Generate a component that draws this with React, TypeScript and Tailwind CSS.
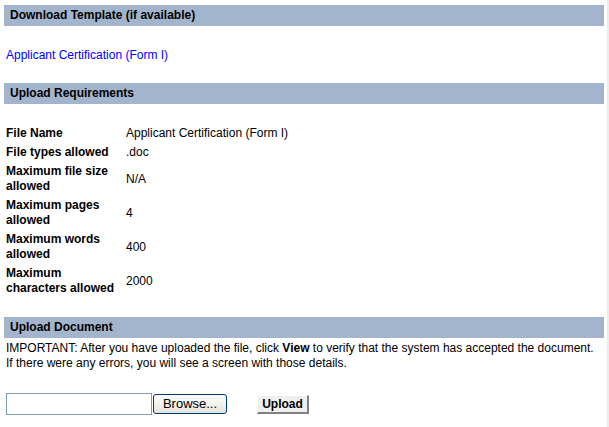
import React from "react";

const rows: { label: string; value: string }[] = [
  { label: "File Name", value: "Applicant Certification (Form I)" },
  { label: "File types allowed", value: ".doc" },
  { label: "Maximum file size allowed", value: "N/A" },
  { label: "Maximum pages allowed", value: "4" },
  { label: "Maximum words allowed", value: "400" },
  { label: "Maximum characters allowed", value: "2000" },
];

function Header({ children }: { children: React.ReactNode }) {
  return (
    <div className="h-[21px] w-[600px] bg-[#a3b5cd] font-bold pl-[6px] flex items-center text-black">
      {children}
    </div>
  );
}

export default function App() {
  return (
    <div
      className="w-[609px] h-[427px] bg-white border-r-[2px] border-[#ececec] pt-[5px] pl-[4px] text-[12px] leading-[15px] text-black overflow-hidden"
      style={{ fontFamily: '"Liberation Sans", Arial, sans-serif' }}
    >
      <Header>Download Template (if available)</Header>
      <div className="mt-[22px] pl-[2px] h-[15px]">
        <a href="#" className="text-[#0000ff]">
          Applicant Certification (Form I)
        </a>
      </div>
      <div className="mt-[20px]">
        <Header>Upload Requirements</Header>
      </div>
      <div className="mt-[20px] flex flex-col">
        {rows.map((r) => (
          <div key={r.label} className="flex items-center py-[2px]">
            <div className="w-[120px] px-[2px] font-bold">{r.label}</div>
            <div className="px-[2px]">{r.value}</div>
          </div>
        ))}
      </div>
      <div className="mt-[19px]">
        <Header>Upload Document</Header>
      </div>
      <div className="mt-[3px] pl-[2px]">
        IMPORTANT: After you have uploaded the file, click <b>View</b> to verify that the system has accepted the document.
        <br />
        If there were any errors, you will see a screen with those details.
      </div>
      <div className="mt-[22px] pl-[2px] flex items-start">
        <input
          type="text"
          className="w-[146px] h-[22px] border border-[#7f9db9] bg-white outline-none"
        />
        <button
          className="ml-[1px] mt-[1px] w-[74px] h-[20px] rounded-[3px] border border-[#003c74] bg-gradient-to-b from-white to-[#e6e3d6] text-[13px] leading-[16px] flex items-center justify-center"
          style={{ fontFamily: '"Liberation Sans", Arial, sans-serif' }}
        >
          Browse...
        </button>
        <button
          className="ml-[30px] mt-[2px] w-[52px] h-[19px] bg-[#efefef] border-t border-l border-t-white border-l-white border-b-[2px] border-r-[2px] border-b-[#808080] border-r-[#808080] font-bold text-[12px] leading-[15px] flex items-center justify-center"
          style={{ fontFamily: '"Liberation Sans", Arial, sans-serif' }}
        >
          Upload
        </button>
      </div>
    </div>
  );
}
